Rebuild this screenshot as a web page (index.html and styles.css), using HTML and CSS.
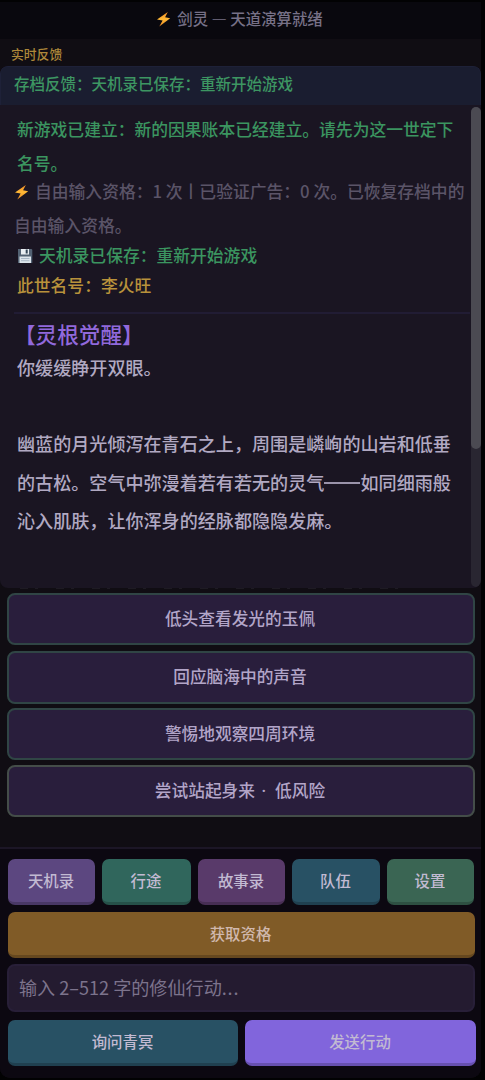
FILE: index.html
```html
<!DOCTYPE html>
<html lang="zh-CN">
<head>
<meta charset="utf-8">
<meta name="viewport" content="width=device-width, initial-scale=1">
<title>剑灵</title>
<link rel="stylesheet" href="styles.css">
</head>
<body>
<svg width="0" height="0" class="defs" aria-hidden="true">
  <defs>
    <linearGradient id="boltFill" x1="0" y1="0" x2="0" y2="1"><stop offset="0" stop-color="#f08a24"/><stop offset=".5" stop-color="#ffb936"/><stop offset="1" stop-color="#e58522"/></linearGradient>
    <symbol id="bolt" viewBox="0 0 16 16"><path fill="url(#boltFill)" d="M11.800 1 1 8.600l5.600.9L3.300 15.400 14.200 7.300 9.100 6.200Z"/></symbol>
  </defs>
</svg>
<div class="app">
  <header class="topbar"><svg class="bolt"><use href="#bolt"/></svg><span>剑灵 — 天道演算就绪</span></header>
  <div class="feed-label">实时反馈</div>
  <main class="panel">
    <div class="status">存档反馈：天机录已保存：重新开始游戏</div>
    <div class="log">
      <p class="msg green">新游戏已建立：新的因果账本已经建立。请先为这一世定下<br>名号。</p>
      <p class="msg quota"><svg class="bolt"><use href="#bolt"/></svg><span class="quota-a">自由输入资格：1 次丨已验证广告：0 次。已恢复存档中的</span><br>自由输入资格。</p>
      <p class="msg single green"><svg class="disk" viewBox="0 0 16 16"><path fill="#536273" d="M1 1h13.500l.8.8V15H1z"/><path fill="#e9eef2" d="M4 1h8v5.500H4z"/><path fill="#344657" d="M8.700 1.500h2v4h-2z"/><path fill="#dce4eb" d="M2.500 8.500h11.500V15H2.500z"/><path stroke="#a9b8c6" d="M4 10.500h8.500M4 12.700h8.500"/></svg>天机录已保存：重新开始游戏</p>
      <p class="msg single gold">此世名号：李火旺</p>
      <hr>
      <h1>【灵根觉醒】</h1>
      <p class="story">你缓缓睁开双眼。</p>
      <p class="story gap">幽蓝的月光倾泻在青石之上，周围是嶙峋的山岩和低垂<br>的古松。空气中弥漫着若有若无的灵气<span class="dash"></span>如同细雨般<br>沁入肌肤，让你浑身的经脉都隐隐发麻。</p>
    </div>
    <div class="scrollbar"><div class="thumb"></div></div>
  </main>
  <div class="peek"></div>
  <section class="choices">
    <button class="choice">低头查看发光的玉佩</button>
    <button class="choice tall">回应脑海中的声音</button>
    <button class="choice">警惕地观察四周环境</button>
    <button class="choice risk">尝试站起身来<span class="mid"> · </span>低风险</button>
  </section>
  <footer class="dock">
    <nav class="tabs">
      <button class="btn violet">天机录</button>
      <button class="btn teal">行途</button>
      <button class="btn plum">故事录</button>
      <button class="btn blue">队伍</button>
      <button class="btn moss">设置</button>
    </nav>
    <button class="btn amber">获取资格</button>
    <div class="field">输入 <span class="range">2–512</span> 字的修仙行动<span class="dots">...</span></div>
    <div class="actions">
      <button class="btn blue">询问青冥</button>
      <button class="btn bright">发送行动</button>
    </div>
  </footer>
</div>
</body>
</html>
```
FILE: styles.css
```css
* { box-sizing: border-box; margin: 0; padding: 0; }
body { background: #020203; font-family: "Noto Sans CJK SC", sans-serif; font-weight: 500; overflow: hidden; }
.defs { display: block; height: 0; }
.app { width: 481px; height: 1078px; background: #100d13; border-radius: 0 0 10px 10px; overflow: hidden; display: flex; flex-direction: column; }
.bolt { width: 16px; height: 16px; flex: none; }

.topbar { height: 39px; flex: none; background: #09080e; border-top: 2px solid #020203; display: flex; align-items: center; justify-content: center; gap: 5px; color: #777187; font-size: 15.4px; padding: 0 0 5px 0; white-space: pre; }
.topbar .bolt { margin: 1px 0 0 -2px; }
.feed-label { height: 27px; flex: none; padding-left: 11px; font-size: 12.800px; line-height: 30px; color: #ad883a; }

.panel { position: relative; height: 522px; flex: none; background: #1a1522; border-radius: 8px; overflow: hidden; }
.status { height: 39px; background: #1a1d30; border: 1px solid #1e2138; border-bottom: 0; border-radius: 7px 7px 0 0; padding-left: 13px; font-size: 15.5px; line-height: 32px; color: #3d9662; }
.log { padding: 8px 11px 0 14px; white-space: nowrap; }
.msg { font-size: 16.800px; line-height: 33.500px; padding-left: 3px; }
.green { color: #3b9560; }
.gold { color: #b8923b; }
.quota { color: #5b5468; padding-left: 0; margin-top: -5px; }
.quota .bolt { vertical-align: -2px; margin-right: 5px; }
.single { line-height: 30px; }
.quota + .single { margin-top: -2px; }
.disk { width: 16px; height: 16px; vertical-align: -2px; margin-right: 6px; }
hr { border: 0; height: 2px; background: #211c34; margin: 12px 0 5px; }
h1 { font-size: 21.600px; font-weight: 500; line-height: 30px; color: #9169dc; }
.story { font-size: 18.080px; line-height: 38.300px; padding-left: 3px; color: #b1a9c2; margin-top: -1px; }
.story.gap { margin-top: 38px; }
.dash { display: inline-block; width: 36.160px; height: 1.500px; background: currentColor; vertical-align: 6px; opacity: .85; }
.scrollbar { position: absolute; right: 0; top: 41px; width: 10px; height: 480px; border-radius: 5px; background: #292631; }
.thumb { height: 342px; border-radius: 5px; background: #4b4a52; }
.peek { height: 1px; flex: none; margin: 0 74px 0 20px; background: repeating-linear-gradient(90deg, #1e1b23 0 8px, transparent 8px 15px, #1e1b23 15px 18px, transparent 18px 36px); }

.choices { height: 258px; flex: none; padding: 4px 6px 0 7px; display: flex; flex-direction: column; gap: 5px; }
button { font-family: inherit; font-weight: inherit; border: 0; display: block; }
.choice { height: 52px; flex: none; border: 2px solid #304545; border-radius: 8px; background: #291e3c; color: #b2a5c8; font-size: 16.700px; padding: 0 2px 2px 0; }
.choice.tall { height: 53px; margin-top: 1px; margin-bottom: -1px; padding-bottom: 3px; }
.choice.risk { border-color: #444d49; }
.mid { white-space: pre; font-family: "Noto Sans", sans-serif; letter-spacing: 2.300px; }

.dock { flex: 1; border-top: 2px solid #1c1626; background: #0c0811; padding: 10px 5px 0 8px; display: flex; flex-direction: column; }
.tabs { display: grid; grid-template-columns: 87px 89px 87px 88px 87px; gap: 7px; margin-bottom: 7px; }
.btn { height: 46px; flex: none; border-radius: 7px; border-bottom: 3px solid rgba(0,0,0,.2); color: #c2bad2; font-size: 15.400px; padding: 0 1px 2px 0; }
.violet { background-color: #5c4780; }
.teal { background-color: #30665c; }
.plum { background-color: #593a6a; }
.blue { background-color: #285164; }
.moss { background-color: #3a6553; }
.amber { background-color: #805b27; width: 467px; margin-bottom: 6px; color: #d0b8ad; padding-right: 2px; }
.bright { background-color: #8165dc; }
.field { width: 468px; height: 48px; flex: none; margin-left: -1px; border: 2px solid #281f38; border-radius: 8px; background: #241b30; padding-left: 10px; color: #7c738c; font-size: 18.100px; font-weight: 400; line-height: 43px; }
.dots { letter-spacing: .8px; }
.actions { display: grid; grid-template-columns: 230px 231px; gap: 7px; margin-top: 8px; }
```
